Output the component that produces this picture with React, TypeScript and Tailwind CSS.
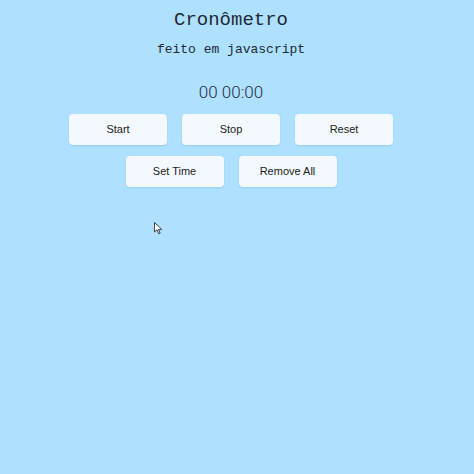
import React from "react";

const btn =
  "w-[98px] h-[31px] rounded-[4px] bg-[#f3f9ff] shadow-[0_1px_2px_rgba(0,60,120,0.12)] text-[11px] text-[#222] [font-family:'Liberation_Sans',Arial,sans-serif] flex items-center justify-center";

export default function App() {
  return (
    <div className="relative min-h-[474px] w-[474px] bg-[#aee0ff]">
      <div className="w-[462px] flex flex-col items-center">
        <h1 className="mt-[8px] text-[19px] leading-[24px] text-[#1f2a33] [font-family:'Liberation_Mono',monospace]">
          Cronômetro
        </h1>
        <p className="mt-[9px] text-[13px] leading-[18px] text-[#1f2a33] [font-family:'Liberation_Mono',monospace]">
          feito em javascript
        </p>
        <div className="mt-[22px] text-[17px] leading-[22px] font-light text-[#1e3040] [font-family:Roboto,sans-serif]">
          00 00:00
        </div>
        <div className="mt-[11px] flex gap-[15px]">
          <button className={btn}>Start</button>
          <button className={btn}>Stop</button>
          <button className={btn}>Reset</button>
        </div>
        <div className="mt-[11px] flex gap-[15px]">
          <button className={btn}>Set Time</button>
          <button className={btn}>Remove All</button>
        </div>
      </div>
      {/* mouse pointer */}
      <svg
        className="absolute left-[154px] top-[222px]"
        width="9"
        height="13"
        viewBox="0 0 9 13"
      >
        <path d="M0.5 0.5 L0.5 10 L3 7.8 L4.8 11.8 L6.2 11.2 L4.5 7.4 L7.8 7.4 Z" fill="#fff" stroke="#333" strokeWidth="0.9" />
      </svg>
    </div>
  );
}
